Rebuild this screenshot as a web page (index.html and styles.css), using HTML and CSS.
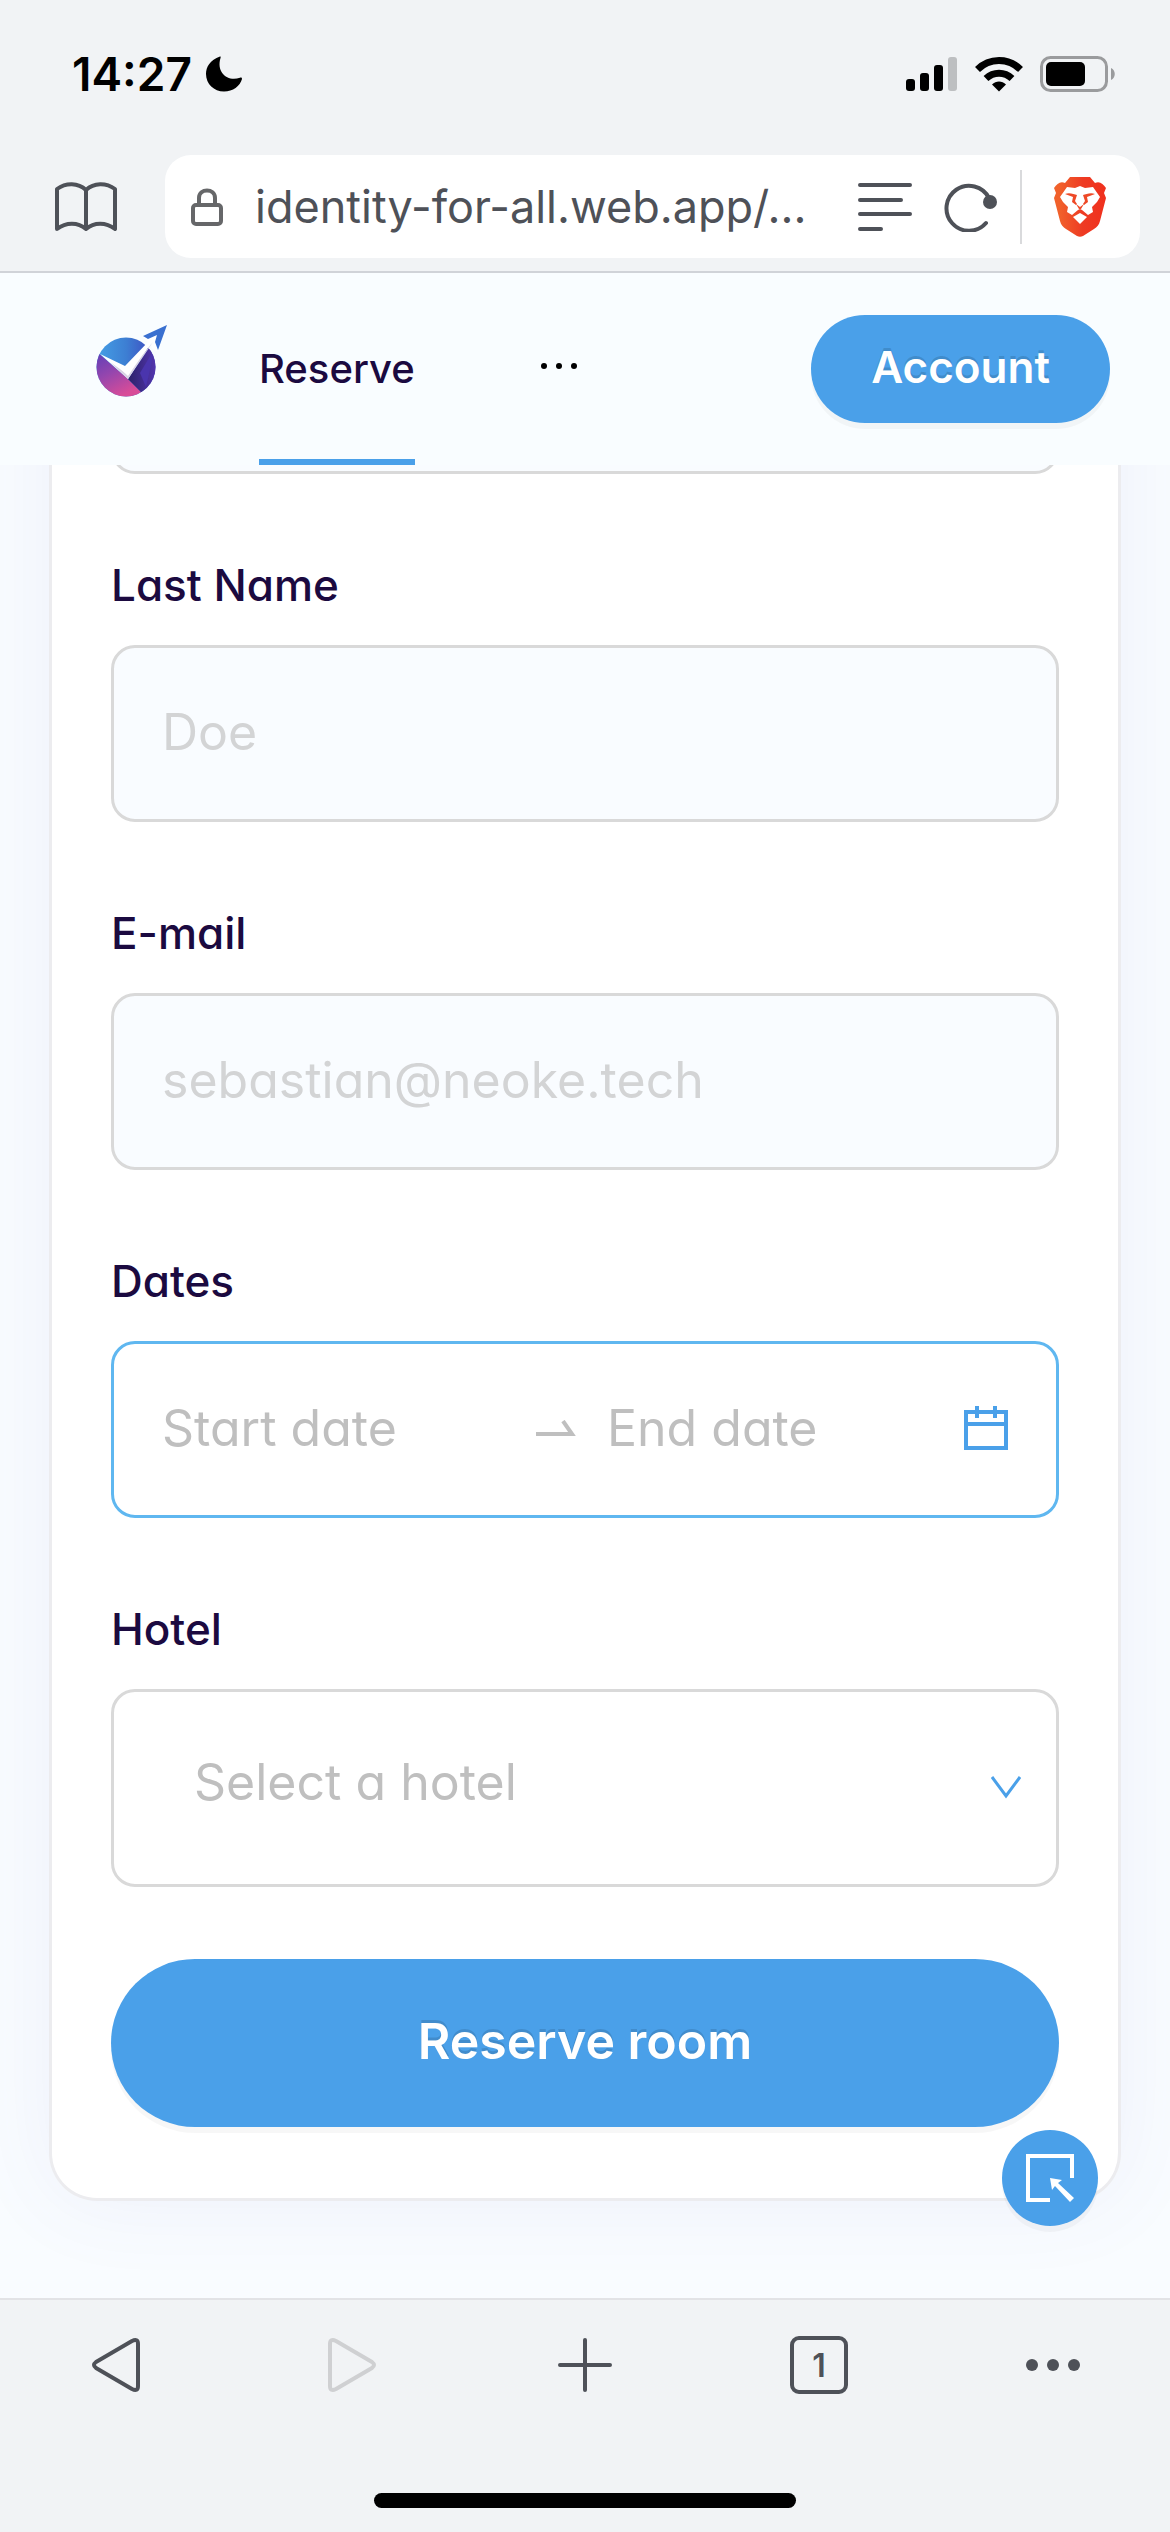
FILE: index.html
```html
<!DOCTYPE html>
<html lang="en">
<head>
    <meta charset="UTF-8">
    <meta name="viewport" content="width=device-width, initial-scale=1.0">
    <title>Reserve a room</title>
    <link rel="stylesheet" href="styles.css">
</head>
<body>
    <!-- Browser top bar -->
    <div class="browser-top">
        <div class="status-bar">
            <div class="status-left">
                <span class="time">14:27</span>
                <svg width="36" height="36" viewBox="0 0 36 36"><path d="M14 0.500C4 4 0 11 0 18C0 28 8 35.500 18 35.500C27 35.500 34 30 36 23C36 21.500 35 21.300 34 21.700C22 26 10 17 14.500 2C14.800 1 14.800 0.300 14 0.500Z"/></svg>
            </div>
            <div class="status-right">
                <svg width="52" height="36" viewBox="0 0 52 36">
                    <rect x="0" y="23" width="9" height="12" rx="3"/>
                    <rect x="14" y="17" width="9" height="18" rx="3"/>
                    <rect x="28" y="9" width="9" height="26" rx="3"/>
                    <rect x="42" y="1" width="9" height="34" rx="3" fill="#bdbfc1"/>
                </svg>
                <svg width="48" height="36" viewBox="0 0 48 36">
                    <path d="M24 35.500L17 28.500C21 24.500 27 24.500 31 28.500Z"/>
                    <path d="M11 22.500C18.500 15.500 29.500 15.500 37 22.500" fill="none" stroke="#000" stroke-width="7"/>
                    <path d="M2.500 13.500C14.500 1.500 33.500 1.500 45.500 13.500" fill="none" stroke="#000" stroke-width="7"/>
                </svg>
                <svg width="76" height="36" viewBox="0 0 76 36">
                    <rect x="1.500" y="1.500" width="65" height="33" rx="9" fill="none" stroke="#9a9b9d" stroke-width="3"/>
                    <rect x="6" y="6" width="39" height="24" rx="5"/>
                    <path d="M71 12C76 14 76 22 71 24Z" fill="#9a9b9d"/>
                </svg>
            </div>
        </div>
        <div class="address-row">
            <button class="icon-btn" aria-label="Bookmarks">
                <svg width="64" height="50" viewBox="0 0 64 50" fill="none" stroke="#4e5158" stroke-width="4" stroke-linejoin="round" stroke-linecap="round"><path d="M32 8C24 0.500 12 0.500 3 7V47C12 40 24 40 32 47C40 40 52 40 61 47V7C52 0.500 40 0.500 32 8V47"/></svg>
            </button>
            <div class="address-bar">
                <svg class="lock" width="32" height="38" viewBox="0 0 32 38" fill="none" stroke="#666769" stroke-width="4"><rect x="2" y="17" width="28" height="19" rx="3"/><path d="M8 17V10C8 0 24 0 24 10V17"/></svg>
                <input class="url" type="text" aria-label="Address" value="identity-for-all.web.app/..." readonly>
                <button class="icon-btn" aria-label="Reader mode">
                    <svg width="54" height="50" viewBox="0 0 54 50" stroke="#4e5158" stroke-width="4" stroke-linecap="round"><path d="M2 3H52M2 18H43M2 32H52M2 47H23"/></svg>
                </button>
                <button class="icon-btn reload" aria-label="Reload">
                    <svg width="54" height="50" viewBox="0 0 54 50"><path d="M42 41A22.500 22.500 0 1 1 45 16" fill="none" stroke="#4e5158" stroke-width="4" stroke-linecap="round"/><circle cx="46" cy="20" r="7" fill="#4e5158"/></svg>
                </button>
                <span class="divider"></span>
                <button class="icon-btn" aria-label="Brave Shields">
                    <svg width="52" height="60" viewBox="0 0 52 60">
                        <defs>
                            <linearGradient id="brave"><stop offset="0.1" stop-color="#f1612b"/><stop offset="0.55" stop-color="#ee3b23"/><stop offset="1" stop-color="#f0301d"/></linearGradient>
                        </defs>
                        <path fill="url(#brave)" d="M16 0H36L41 6C46 4 49 7 52 11L50 16L52 21L46 44C45 48 43 50 40 52L29 59C27 60 25 60 23 59L12 52C9 50 7 48 6 44L0 21L2 16L0 11C3 7 6 4 11 6Z"/>
                        <path fill="#fff" d="M13 10L21 11L26 9L31 11L39 10L46 20L43 25L38 30L39 35L34 38L28 33L26 32L24 33L18 38L13 35L14 30L9 25L6 20Z"/>
                        <path fill="#ee4826" d="M11 17C15 15 20 17 23 18L21 24L23 27L22 28L18 25L19 20ZM41 17C37 15 32 17 29 18L31 24L29 27L30 28L34 25L33 20Z"/>
                        <path fill="#ee4826" d="M22 27L26 30L30 27L27 32H25Z"/>
                        <path fill="#fff" d="M26 36L33 40L26 47L19 40Z"/>
                    </svg>
                </button>
            </div>
        </div>
    </div>

    <!-- Site header -->
    <header class="site-header">
        <a class="logo" href="#" aria-label="Home">
            <svg width="72" height="72" viewBox="0 0 72 72">
                <defs>
                    <linearGradient id="sky" x1="0" x2="1"><stop offset="0" stop-color="#45a0e6"/><stop offset="0.5" stop-color="#3d7fd3"/><stop offset="1" stop-color="#3f44be"/></linearGradient>
                    <linearGradient id="berry" x1="0" y1="0" x2="0.5" y2="1"><stop offset="0" stop-color="#5b3eb8"/><stop offset="0.5" stop-color="#9446ae"/><stop offset="1" stop-color="#d84c98"/></linearGradient>
                    <linearGradient id="night"><stop offset="0" stop-color="#2b2168"/><stop offset="1" stop-color="#5637b4"/></linearGradient>
                    <clipPath id="disc"><circle cx="30" cy="42" r="29.500"/></clipPath>
                </defs>
                <g clip-path="url(#disc)">
                    <rect width="60" height="72" fill="url(#sky)"/>
                    <path d="M0 26L32 54L46 68L36 72H0Z" fill="url(#berry)"/>
                    <path d="M32 54L55 20L62 28V60L46 68Z" fill="url(#night)"/>
                    <path d="M44 48L56 28V36L50 62Z" fill="#4a35ad"/>
                </g>
                <path d="M4 29L29 41L52 17L47 12L60 8L61 26L56 24L55 18L32 54Z" fill="#fff"/>
                <path d="M14 37L31 49L57 17L32 54Z" fill="#d9d3e4"/>
                <path d="M18 38L31 48L56 16L32 51Z" fill="#fff"/>
                <path d="M71 0L47 11L52 14L61 10L59 17L62 25Z" fill="#3a70d0"/>
            </svg>
        </a>
        <nav class="menu">
            <a class="menu-item active" href="#">Reserve</a>
            <button class="menu-more" aria-label="More pages">
                <svg width="38" height="8" viewBox="0 0 38 8"><circle cx="4" cy="4" r="3"/><circle cx="19" cy="4" r="3"/><circle cx="34" cy="4" r="3"/></svg>
            </button>
        </nav>
        <button class="account">Account</button>
    </header>

    <!-- Reservation form, scrolled under the header -->
    <main class="page">
        <form class="card">
            <div class="field">
                <input class="control" type="text" aria-label="First name">
            </div>
            <div class="field">
                <label for="last-name">Last Name</label>
                <input class="control" id="last-name" type="text" placeholder="Doe">
            </div>
            <div class="field">
                <label for="email">E-mail</label>
                <input class="control" id="email" type="email" placeholder="sebastian@neoke.tech">
            </div>
            <div class="field">
                <label for="start-date">Dates</label>
                <div class="control range">
                    <input id="start-date" type="text" placeholder="Start date">
                    <svg class="to" width="40" height="16" viewBox="0 0 40 16"><path d="M0 14H36L27 1" fill="none" stroke="#bfbfbf" stroke-width="4"/></svg>
                    <input type="text" aria-label="End date" placeholder="End date">
                    <svg width="44" height="44" viewBox="0 0 44 44" fill="none" stroke="#4aa0e9" stroke-width="4"><path d="M2 6H42V42H2ZM2 18H42M13 0V12M31 0V12"/></svg>
                </div>
            </div>
            <div class="field">
                <label for="hotel">Hotel</label>
                <div class="select-wrap">
                    <select class="control" id="hotel">
                        <option>Select a hotel</option>
                    </select>
                    <svg class="arrow" width="30" height="24" viewBox="0 0 30 24"><path d="M1 1L15 20L29 1" fill="none" stroke="#4aa0e9" stroke-width="3"/></svg>
                </div>
            </div>
            <button class="submit" type="button">Reserve room</button>
        </form>
        <button class="float-btn" aria-label="Select element">
            <svg width="48" height="48" viewBox="0 0 48 48"><path d="M24 46H2V2H46V24" fill="none" stroke="#fff" stroke-width="4"/><path d="M24 24L36 26L32 29L48 44L44 48L29 32L26 36Z" fill="#fff"/></svg>
        </button>
    </main>

    <!-- Browser bottom bar -->
    <footer class="browser-bottom">
        <div class="tools">
            <button class="icon-btn" aria-label="Back">
                <svg width="54" height="60" viewBox="0 0 54 60" fill="none" stroke="#4e5158" stroke-width="4" stroke-linejoin="round"><path d="M6 27L42 6Q48 3 48 9V51Q48 57 42 54L6 33Q2 30 6 27Z"/></svg>
            </button>
            <button class="icon-btn" aria-label="Forward" disabled>
                <svg width="54" height="60" viewBox="0 0 54 60" fill="none" stroke="#cfd0d2" stroke-width="4" stroke-linejoin="round"><path d="M48 27L12 6Q6 3 6 9V51Q6 57 12 54L48 33Q52 30 48 27Z"/></svg>
            </button>
            <button class="icon-btn" aria-label="New tab">
                <svg width="54" height="54" viewBox="0 0 54 54" stroke="#4e5158" stroke-width="4" stroke-linecap="round"><path d="M27 2V52M2 27H52"/></svg>
            </button>
            <button class="tabs" aria-label="Tabs">1</button>
            <button class="icon-btn" aria-label="Menu">
                <svg width="54" height="12" viewBox="0 0 54 12" fill="#4e5158"><circle cx="6" cy="6" r="6"/><circle cx="27" cy="6" r="6"/><circle cx="48" cy="6" r="6"/></svg>
            </button>
        </div>
        <div class="home-indicator"></div>
    </footer>
</body>
</html>
```
FILE: styles.css
```css
/* General Styles */
* {
    box-sizing: border-box;
}

body {
    margin: 0;
    min-height: 100vh;
    display: flex;
    flex-direction: column;
    font-family: Inter, "Open Sans", sans-serif;
    font-feature-settings: "cv11";
    background: #f9fcff;
    color: #1b0a40;
}

button, input, select {
    font: inherit;
    font-feature-settings: inherit;
    color: inherit;
    margin: 0;
    padding: 0;
    border: none;
    background: none;
    outline: none;
}

button {
    cursor: pointer;
}

svg {
    display: block;
    flex-shrink: 0;
}

.icon-btn {
    display: flex;
    align-items: center;
    justify-content: center;
}

/* Browser top bar */
.browser-top {
    background: #f1f3f5;
    border-bottom: 2px solid #d0d3d8;
    font-feature-settings: normal;
}

.status-bar {
    display: flex;
    justify-content: space-between;
    align-items: center;
    padding: 46px 54px 0 72px;
    height: 102px;
}

.status-left {
    display: flex;
    align-items: center;
    gap: 14px;
}

.status-right {
    display: flex;
    align-items: center;
    gap: 17px;
}

.time {
    font-size: 46px;
    font-weight: 600;
    color: #000;
}

.address-row {
    display: flex;
    align-items: center;
    gap: 47px;
    padding: 53px 30px 13px 54px;
}

.address-bar {
    flex: 1;
    min-width: 0;
    display: flex;
    align-items: center;
    height: 103px;
    padding: 0 34px 0 26px;
    background: #fff;
    border-radius: 26px;
}

.url {
    flex: 1;
    min-width: 0;
    margin: 0 24px 0 32px;
    font-size: 45px;
    color: #4e5158;
}

.reload {
    margin-left: 32px;
}

.divider {
    width: 2px;
    height: 74px;
    margin: 0 32px 0 22px;
    background: #d9dadc;
}

/* Site header */
.site-header {
    position: relative;
    z-index: 1;
    display: flex;
    height: 192px;
    padding: 0 60px 0 96px;
    background: #f9fdff;
}

.logo {
    padding-top: 52px;
}

.menu {
    flex: 1;
    display: flex;
    gap: 125px;
    margin-left: 91px;
}

.menu-item {
    padding-top: 66px;
    font-size: 40px;
    line-height: 60px;
    font-weight: 500;
    color: inherit;
    text-decoration: none;
}

.menu-item.active {
    border-bottom: 6px solid #4aa0e9;
}

.menu-more {
    align-self: flex-start;
    padding: 89px 0;
}

.account {
    height: 108px;
    margin-top: 42px;
    padding: 0 60px 4px;
    border-radius: 54px;
    background: #4aa0e9;
    box-shadow: 0 6px 0 rgba(0, 0, 0, 0.03);
    color: #fff;
    font-size: 44px;
    font-weight: 600;
    text-shadow: 0 -3px 0 rgba(0, 0, 0, 0.12);
}

/* Reservation form */
.page {
    position: relative;
    flex: 1;
    padding: 0 49px 97px;
    overflow: hidden;
}

.card {
    display: flex;
    flex-direction: column;
    gap: 78px;
    margin-top: -168px;
    padding: 0 59px 71px;
    background: #fff;
    border: 3px solid #ececef;
    border-top: none;
    border-radius: 0 0 48px 48px;
    box-shadow: 0 0 90px rgba(90, 90, 190, 0.07);
}

.field {
    display: flex;
    flex-direction: column;
}

.field label {
    margin-bottom: 27px;
    font-size: 44px;
    line-height: 66px;
    font-weight: 500;
}

.control {
    width: 100%;
    height: 177px;
    padding: 0 48px 4px;
    border: 3px solid #d9d9d9;
    border-radius: 24px;
    background: #f9fcff;
    font-size: 50px;
}

input::placeholder {
    color: #bfbfbf;
    opacity: 1;
}

input.control::placeholder {
    color: #d3d4d5;
}

.range {
    display: flex;
    align-items: center;
    background: #fff;
    border-color: #5fb7f0;
}

.range input {
    flex: 1;
    min-width: 0;
}

.range .to {
    margin: 0 31px 0 17px;
}

.select-wrap {
    position: relative;
}

select.control {
    display: block;
    height: 198px;
    padding: 0 80px 12px;
    background: #fff;
    color: #bfbfbf;
    appearance: none;
}

.arrow {
    position: absolute;
    right: 38px;
    top: 50%;
    margin-top: -12px;
    pointer-events: none;
}

.submit {
    height: 168px;
    margin-top: -6px;
    padding-bottom: 4px;
    border-radius: 84px;
    background: #4aa0e9;
    box-shadow: 0 6px 0 rgba(0, 0, 0, 0.03);
    color: #fff;
    font-size: 50px;
    font-weight: 600;
    text-shadow: 0 -3px 0 rgba(0, 0, 0, 0.12);
}

.float-btn {
    position: absolute;
    right: 72px;
    bottom: 72px;
    display: flex;
    align-items: center;
    justify-content: center;
    width: 96px;
    height: 96px;
    border-radius: 50%;
    background: #4aa0e9;
    box-shadow: 0 6px 0 rgba(0, 0, 0, 0.03);
}

/* Browser bottom bar */
.browser-bottom {
    background: #f1f3f5;
    border-top: 2px solid #e2e3e6;
    padding-bottom: 24px;
}

.tools {
    display: grid;
    grid-template-columns: repeat(5, 1fr);
    align-items: center;
    justify-items: center;
    height: 130px;
}

.tabs {
    width: 58px;
    height: 58px;
    border: 4px solid #4e5158;
    border-radius: 9px;
    color: #4e5158;
    font-size: 32px;
    font-weight: 600;
}

.home-indicator {
    width: 36%;
    height: 15px;
    margin: 63px auto 0;
    border-radius: 8px;
    background: #000;
}
```
